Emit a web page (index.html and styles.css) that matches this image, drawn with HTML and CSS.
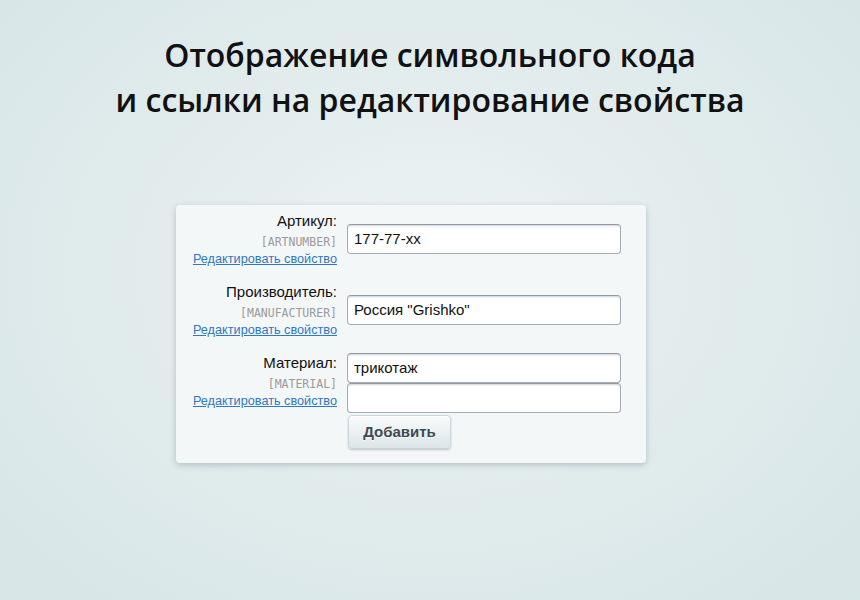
FILE: index.html
```html
<!DOCTYPE html>
<html lang="ru">
<head>
<meta charset="utf-8">
<title>Отображение символьного кода</title>
<link rel="stylesheet" href="styles.css">
</head>
<body>
<div class="page">
  <h1 class="title">Отображение символьного кода<br>и ссылки на редактирование свойства</h1>
  <div class="card">
    <div class="row">
      <div class="label-col">
        <div class="label">Артикул:</div>
        <div class="code">[ARTNUMBER]</div>
        <a class="edit" href="#">Редактировать свойство</a>
      </div>
      <div class="field-col">
        <div class="input">177-77-xx</div>
      </div>
    </div>
    <div class="row">
      <div class="label-col">
        <div class="label">Производитель:</div>
        <div class="code">[MANUFACTURER]</div>
        <a class="edit" href="#">Редактировать свойство</a>
      </div>
      <div class="field-col">
        <div class="input">Россия "Grishko"</div>
      </div>
    </div>
    <div class="row row-multi">
      <div class="label-col">
        <div class="label">Материал:</div>
        <div class="code">[MATERIAL]</div>
        <a class="edit" href="#">Редактировать свойство</a>
      </div>
      <div class="field-col">
        <div class="input">трикотаж</div>
        <div class="input"></div>
        <div class="btn">Добавить</div>
      </div>
    </div>
  </div>
</div>
</body>
</html>
```
FILE: styles.css
```css
html, body {
  margin: 0;
  padding: 0;
  height: 100%;
}
body {
  background: radial-gradient(ellipse at 50% 45%, #edf3f4 0%, #e2eced 45%, #d6e5e6 100%);
  font-family: "Liberation Sans", Arial, sans-serif;
}
.page {
  width: 860px;
  height: 600px;
  display: flex;
  flex-direction: column;
  align-items: center;
}
.title {
  margin: 32px 0 0;
  font-family: "Open Sans", sans-serif;
  font-weight: 600;
  font-size: 32px;
  line-height: 45px;
  color: #111;
  text-align: center;
  letter-spacing: 0;
}
.card {
  align-self: flex-start;
  margin: 83px 0 0 176px;
  width: 470px;
  box-sizing: border-box;
  padding: 6px 0 14px;
  background: #f4f7f8;
  border-radius: 4px;
  box-shadow: 0 2px 6px rgba(60, 80, 90, 0.28);
  display: flex;
  flex-direction: column;
  gap: 15px;
}
.row {
  display: flex;
  align-items: center;
}
.label-col {
  width: 161px;
  flex: none;
  align-self: flex-start;
  display: flex;
  flex-direction: column;
  align-items: flex-end;
  text-align: right;
}
.label {
  padding-top: 1px;
  font-size: 15px;
  line-height: 18px;
  color: #111;
}
.code {
  margin-top: 4px;
  font-family: "DejaVu Sans Mono", monospace;
  font-size: 11.5px;
  line-height: 16px;
  color: #9a9a9a;
}
.edit {
  margin-top: 1px;
  font-size: 12.7px;
  line-height: 16px;
  color: #2f78c4;
  text-decoration: underline;
  white-space: nowrap;
}
.field-col {
  margin-left: 10px;
  display: flex;
  flex-direction: column;
  align-items: flex-start;
}
.row-multi .field-col {
  align-self: flex-start;
}
.input {
  width: 274px;
  height: 30px;
  box-sizing: border-box;
  border: 1px solid #a3acb4;
  border-top-color: #8f99a3;
  border-radius: 4px;
  background: #fff;
  box-shadow: inset 0 2px 2px -1px rgba(170, 180, 185, 0.6);
  padding: 0 6px;
  font-size: 15px;
  line-height: 28px;
  color: #111;
}
.btn {
  margin-top: 2px;
  margin-left: 1px;
  width: 103px;
  height: 34px;
  box-sizing: border-box;
  border-radius: 4px;
  border: 1px solid #cdd6d9;
  background: linear-gradient(to bottom, #f9fbfb, #dde5e8);
  box-shadow: 0 1px 2px rgba(0, 0, 0, 0.22), inset 0 1px 0 #fff;
  color: #3f4b54;
  font-weight: bold;
  font-size: 15px;
  line-height: 32px;
  text-align: center;
  text-shadow: 0 1px rgba(255, 255, 255, 0.7);
}
```
